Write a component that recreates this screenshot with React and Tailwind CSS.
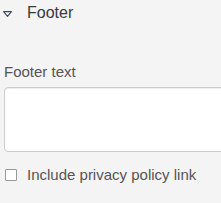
export default function App() {
  return (
    <div className="w-[221px] h-[203px] overflow-hidden bg-[#f4f4f4] text-[#555]" style={{ fontFamily: '"Liberation Sans", Arial, sans-serif' }}>
      <div className="flex items-center h-[26px] pl-[3px]">
        <svg width="9" height="6" viewBox="0 0 9 6" className="mt-[1px]">
          <path d="M0.6 0.6 H8.4 L4.5 5.4 Z" fill="none" stroke="#3d4a5c" strokeWidth="1.1" strokeLinejoin="round" />
        </svg>
        <span className="ml-[15px] text-[16px] leading-[20px] text-[#3a3a3a]">Footer</span>
      </div>
      <div className="pl-[4px] pt-[37px]">
        <div className="text-[15px] leading-[18px]">Footer text</div>
        <div className="mt-[6px] w-[240px] h-[65px] bg-white border border-[#ccc] rounded-[4px] shadow-[inset_0_1px_1px_rgba(0,0,0,0.075)]"></div>
        <div className="flex items-center mt-[14px]">
          <span className="ml-[1px] w-[12px] h-[12px] border border-[#999] bg-white rounded-[1px]"></span>
          <span className="ml-[10px] text-[15px] leading-[18px]">Include privacy policy link</span>
        </div>
      </div>
    </div>
  );
}
